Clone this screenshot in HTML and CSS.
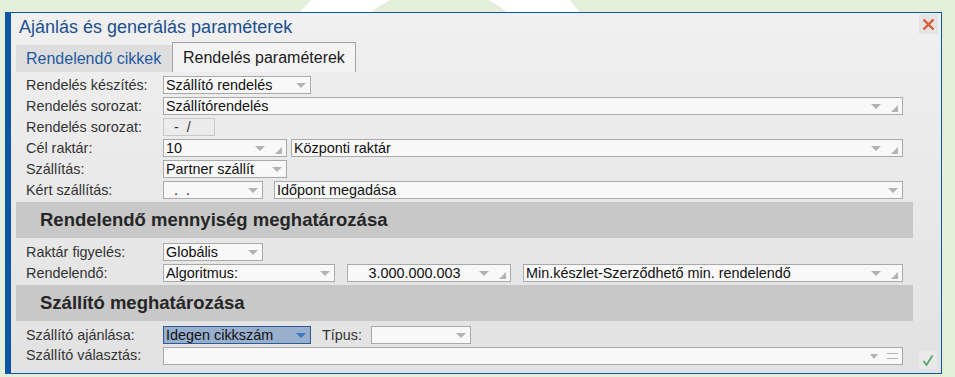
FILE: index.html
```html
<!DOCTYPE html>
<html lang="hu">
<head>
<meta charset="utf-8">
<title>Ajánlás és generálás paraméterek</title>
<link rel="stylesheet" href="styles.css">
</head>
<body>
<svg class="deco" width="955" height="14" viewBox="0 0 955 14" aria-hidden="true">
  <polygon points="311,0 570,0 581,14 298,14" fill="#ffffff"/>
  <circle cx="439" cy="95" r="107" fill="#e2efdb"/>
</svg>
<div class="dialog">
  <div class="titlebar">
    <span class="title">Ajánlás és generálás paraméterek</span>
    <button class="close" aria-label="Bezárás">
      <svg width="19" height="20" viewBox="0 0 19 20"><path d="M4.5 5.5 L14.5 15.5 M14.5 5.5 L4.5 15.5" stroke="#d9583a" stroke-width="2.4" fill="none"/></svg>
    </button>
  </div>
  <div class="tabs">
    <div class="tab">Rendelendő cikkek</div>
    <div class="tab active">Rendelés paraméterek</div>
  </div>
  <div class="form">
    <div class="row">
      <span class="lbl">Rendelés készítés:</span>
      <div class="fld w148"><span class="txt">Szállító rendelés</span><svg class="arr" width="10" height="5"><polygon points="0,0 10,0 5,5"/></svg></div>
    </div>
    <div class="row">
      <span class="lbl">Rendelés sorozat:</span>
      <div class="fld w740"><span class="txt">Szállítórendelés</span><svg class="arr" width="10" height="5"><polygon points="0,0 10,0 5,5"/></svg><svg class="rs" width="7" height="7"><polygon points="7,0 7,7 0,7"/></svg></div>
    </div>
    <div class="row">
      <span class="lbl">Rendelés sorozat:</span>
      <div class="fld ro w52"><span class="txt">&nbsp;-&nbsp;&nbsp;/</span></div>
    </div>
    <div class="row">
      <span class="lbl">Cél raktár:</span>
      <div class="fld w124"><span class="txt">10</span><svg class="arr" width="10" height="5"><polygon points="0,0 10,0 5,5"/></svg><svg class="rs" width="7" height="7"><polygon points="7,0 7,7 0,7"/></svg></div>
      <div class="fld w612 g4"><span class="txt">Központi raktár</span><svg class="arr" width="10" height="5"><polygon points="0,0 10,0 5,5"/></svg><svg class="rs" width="7" height="7"><polygon points="7,0 7,7 0,7"/></svg></div>
    </div>
    <div class="row">
      <span class="lbl">Szállítás:</span>
      <div class="fld w124"><span class="txt">Partner szállít</span><svg class="arr" width="10" height="5"><polygon points="0,0 10,0 5,5"/></svg></div>
    </div>
    <div class="row">
      <span class="lbl">Kért szállítás:</span>
      <div class="fld w100"><span class="txt">&nbsp;&nbsp;.&nbsp;&nbsp;.</span><svg class="arr" width="10" height="5"><polygon points="0,0 10,0 5,5"/></svg></div>
      <div class="fld w629 g11"><span class="txt">Időpont megadása</span><svg class="arr" width="10" height="5"><polygon points="0,0 10,0 5,5"/></svg></div>
    </div>
    <div class="sec first">Rendelendő mennyiség meghatározása</div>
    <div class="row">
      <span class="lbl">Raktár figyelés:</span>
      <div class="fld w100"><span class="txt">Globális</span><svg class="arr" width="10" height="5"><polygon points="0,0 10,0 5,5"/></svg></div>
    </div>
    <div class="row">
      <span class="lbl">Rendelendő:</span>
      <div class="fld w172"><span class="txt">Algoritmus:</span><svg class="arr" width="10" height="5"><polygon points="0,0 10,0 5,5"/></svg></div>
      <div class="fld w164 g12"><span class="txt num">3.000.000.003</span><svg class="arr" width="10" height="5"><polygon points="0,0 10,0 5,5"/></svg><svg class="rs" width="7" height="7"><polygon points="7,0 7,7 0,7"/></svg></div>
      <div class="fld w380 g12"><span class="txt">Min.készlet-Szerződhető min. rendelendő</span><svg class="arr" width="10" height="5"><polygon points="0,0 10,0 5,5"/></svg><svg class="rs" width="7" height="7"><polygon points="7,0 7,7 0,7"/></svg></div>
    </div>
    <div class="sec">Szállító meghatározása</div>
    <div class="row">
      <span class="lbl">Szállító ajánlása:</span>
      <div class="fld sel w148"><span class="txt">Idegen cikkszám</span><svg class="arr" width="10" height="5"><polygon points="0,0 10,0 5,5"/></svg></div>
      <span class="lbl2">Típus:</span>
      <div class="fld w100"><span class="txt"></span><svg class="arr" width="10" height="5"><polygon points="0,0 10,0 5,5"/></svg></div>
    </div>
    <div class="row last">
      <span class="lbl">Szállító választás:</span>
      <div class="fld w740"><span class="txt"></span><svg class="arr small" width="8" height="5"><polygon points="0,0 8,0 4,5"/></svg><svg class="eq" width="11" height="6"><path d="M0 0.5 H11 M0 5.5 H11" stroke="#b3b3b3" stroke-width="1"/></svg></div>
      <button class="ok" aria-label="OK">
        <svg width="18" height="18" viewBox="0 0 18 18"><path d="M4.5 10 L7.5 14 L13.5 4.5" stroke="#52a86c" stroke-width="1.8" fill="none"/></svg>
      </button>
    </div>
  </div>
</div>
</body>
</html>
```

FILE: styles.css
```css
* { box-sizing: border-box; }
html, body { margin: 0; padding: 0; }
body {
  width: 955px;
  height: 377px;
  overflow: hidden;
  background: #e2efdb;
  font-family: "Liberation Sans", Arial, sans-serif;
  position: relative;
}
.deco { position: absolute; left: 0; top: 0; }

.dialog {
  position: relative;
  margin: 12px 0 0 5px;
  width: 937px;
  height: 362px;
  border: 1px solid #0e55a5;
  border-left: 6px solid #0e55a5;
  background: linear-gradient(#f0f0f0, #e2e2e2);
}

.titlebar {
  height: 29px;
  display: flex;
  justify-content: space-between;
  align-items: flex-start;
}
.title {
  font-size: 18px;
  line-height: 18px;
  color: #1d4f8e;
  padding: 5px 0 0 8px;
}
.close {
  margin: 1px 3px 0 0;
  width: 19px;
  height: 20px;
  padding: 0;
  border: 0;
  background: #e4e4e4;
  display: flex;
}

.tabs {
  height: 30px;
  display: flex;
  align-items: flex-end;
  padding-left: 5px;
}
.tab {
  height: 27px;
  width: 156px;
  background: #dedede;
  color: #1f5a9e;
  font-size: 16px;
  padding-left: 10px;
  display: flex;
  align-items: center;
}
.tab.active {
  height: 30px;
  width: 184px;
  background: #f4f4f4;
  color: #1b1b1b;
  border: 1px solid #a4a4a4;
  border-bottom: 0;
  padding-left: 10px;
}

.form { padding-top: 4px; }

.row {
  display: flex;
  align-items: center;
  height: 18px;
  margin-bottom: 3px;
  padding-left: 15px;
  font-size: 14.4px;
}
.row.last { align-items: flex-start; height: 22px; }
.lbl { width: 137px; color: #333; white-space: nowrap; }
.lbl2 { margin-left: 11px; width: 49px; color: #333; }

.fld {
  height: 18px;
  border: 1px solid #a9a9a9;
  background: #f8f8f8;
  display: flex;
  align-items: center;
  padding: 0 4px 0 2px;
  color: #111;
  white-space: nowrap;
  flex-shrink: 0;
}
.fld .txt { flex: 1; overflow: hidden; line-height: 16px; }
.fld .txt.num { text-align: center; }
.fld .arr { fill: #b3b3b3; flex-shrink: 0; }
.fld .rs { fill: #b3b3b3; margin-left: 10px; margin-top: 5px; flex-shrink: 0; }
.fld .eq { margin-left: 9px; flex-shrink: 0; }
.fld.ro { background: transparent; border-color: #c9c9c9; color: #333; padding-left: 6px; }
.fld.sel { background: #98afce; border-color: #2c5b97; }
.fld.sel .arr { fill: #3b79c4; }

.w52 { width: 52px; }
.w100 { width: 100px; }
.w124 { width: 124px; }
.w148 { width: 148px; }
.w164 { width: 164px; }
.w172 { width: 172px; }
.w380 { width: 380px; }
.w612 { width: 612px; }
.w629 { width: 629px; }
.w740 { width: 740px; }
.g4 { margin-left: 4px; }
.g11 { margin-left: 11px; }
.g12 { margin-left: 12px; }

.sec {
  margin: 0 0 5px 5px;
  width: 897px;
  height: 36px;
  background: #c8c8c8;
  color: #262626;
  font-weight: bold;
  font-size: 18.5px;
  padding-left: 24px;
  display: flex;
  align-items: center;
}
.sec.first { margin-top: 2px; }

.ok {
  margin: 4px 0 0 16px;
  width: 18px;
  height: 18px;
  padding: 0;
  border: 0;
  background: #e9e9e9;
  display: flex;
}
```
